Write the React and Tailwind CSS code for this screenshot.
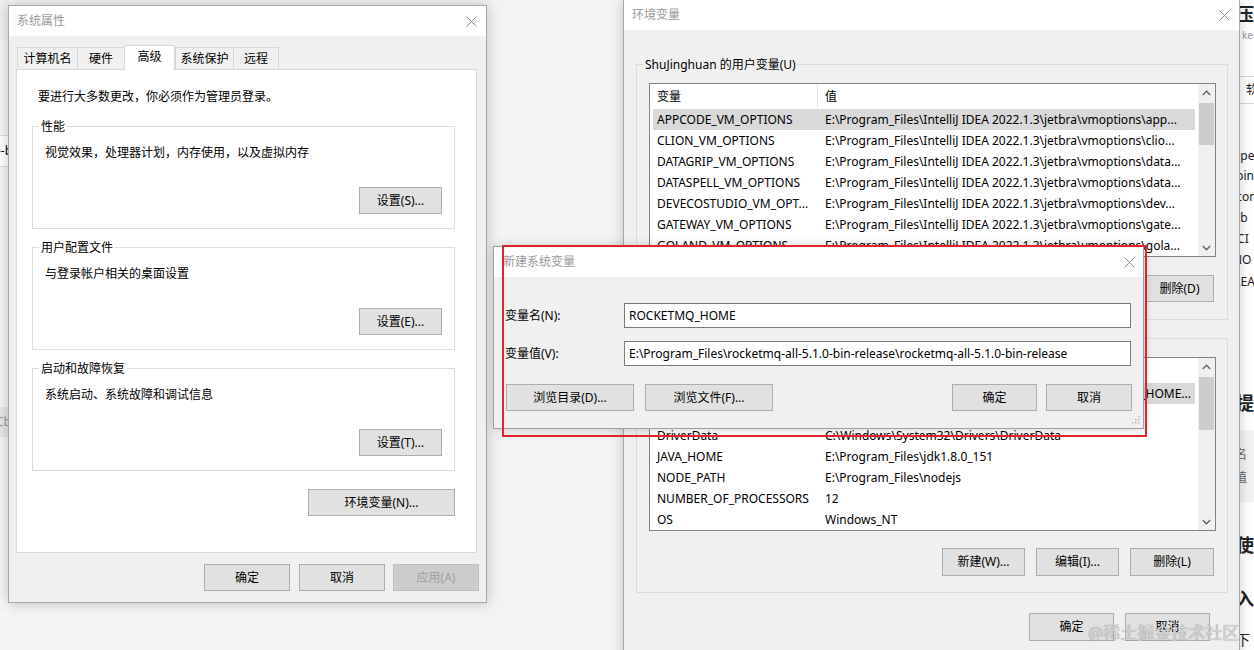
import React from "react";

const font = "font-['Noto_Sans','Noto_Sans_CJK_SC',sans-serif]";

function CloseX({ color = "#8a8a8a" }) {
  return (
    <svg width="11" height="11" viewBox="0 0 11 11">
      <path d="M0.5 0.5L10.5 10.5M10.5 0.5L0.5 10.5" stroke={color} strokeWidth="1" fill="none" />
    </svg>
  );
}

function Chevron({ up }) {
  return (
    <svg width="9" height="6" viewBox="0 0 9 6">
      <path d={up ? "M0.8 5L4.5 1.2L8.2 5" : "M0.8 1L4.5 4.8L8.2 1"} stroke="#606060" strokeWidth="1.3" fill="none" />
    </svg>
  );
}

function Btn({ children, className = "", disabled }) {
  return (
    <div
      className={`flex items-center justify-center h-[27px] border text-[12px] ${
        disabled ? "border-[#bfbfbf] bg-[#cccccc] text-[#a0a0a0]" : "border-[#adadad] bg-[#e1e1e1] text-black"
      } ${className}`}
    >
      {children}
    </div>
  );
}

function TitleBar({ title, className = "" }) {
  return (
    <div className={`h-[30px] bg-white flex items-center justify-between shrink-0 ${className}`}>
      <span className="text-[12px] text-[#9a9a9a]">{title}</span>
      <CloseX />
    </div>
  );
}

function Group({ legend, children, className = "" }) {
  return (
    <div className={`relative border border-[#dcdcdc] ${className}`}>
      <span className="absolute left-[6px] top-[-9px] px-[2px] leading-[17px] text-[12px] bg-inherit">{legend}</span>
      {children}
    </div>
  );
}

const tabs = [
  { label: "计算机名", w: "w-[60px]" },
  { label: "硬件", w: "w-[47px]" },
  { label: "高级", w: "w-[51px]", active: true },
  { label: "系统保护", w: "w-[58px]" },
  { label: "远程", w: "w-[46px]", last: true },
];

function SystemProps() {
  const sections = [
    { legend: "性能", desc: "视觉效果，处理器计划，内存使用，以及虚拟内存", btn: "设置(S)..." },
    { legend: "用户配置文件", desc: "与登录帐户相关的桌面设置", btn: "设置(E)..." },
    { legend: "启动和故障恢复", desc: "系统启动、系统故障和调试信息", btn: "设置(T)..." },
  ];
  return (
    <div className="absolute left-[8px] top-[5px] w-[479px] h-[598px] border border-[#a8a8a8] bg-[#f0f0f0] flex flex-col shadow-[0_0_12px_rgba(0,0,0,0.22)]">
      <TitleBar title="系统属性" className="pl-[8px] pr-[9px]" />
      <div className="mt-[9px] h-[25px] flex items-end pl-[8px]">
        {tabs.map((t) => (
          <div
            key={t.label}
            className={`${t.w} flex items-center justify-center text-[12px] border-[#d9d9d9] ${
              t.active
                ? "h-[25px] bg-white border-t border-l border-r relative z-10 pb-[3px]"
                : `h-[23px] bg-[#f0f0f0] border-t border-l ${t.last ? "border-r" : ""}`
            }`}
          >
            {t.label}
          </div>
        ))}
      </div>
      <div className="ml-[7px] -mt-px w-[461px] h-[484px] bg-white border border-[#d9d9d9] flex flex-col">
        <div className="pl-[21px] pt-[18px] text-[12px] leading-[17px]">要进行大多数更改，你必须作为管理员登录。</div>
        {sections.map((s, i) => (
          <Group
            key={s.legend}
            legend={s.legend}
            className={`ml-[15px] w-[423px] h-[103px] bg-white flex flex-col ${i === 0 ? "mt-[21px]" : "mt-[18px]"}`}
          >
            <div className="pl-[12px] pt-[17px] text-[12px] leading-[17px]">{s.desc}</div>
            <Btn className="self-end mr-[12px] mt-[26px] w-[83px]">{s.btn}</Btn>
          </Group>
        ))}
        <Btn className="self-end mr-[21px] mt-[18px] w-[147px]">环境变量(N)...</Btn>
      </div>
      <div className="mt-[11px] flex justify-end gap-[8px] pr-[7px]">
        <Btn className="w-[86px]">确定</Btn>
        <Btn className="w-[86px] ml-[1px]">取消</Btn>
        <Btn className="w-[86px]" disabled>应用(A)</Btn>
      </div>
    </div>
  );
}

const userRows = [
  ["APPCODE_VM_OPTIONS", "E:\\Program_Files\\IntelliJ IDEA 2022.1.3\\jetbra\\vmoptions\\app..."],
  ["CLION_VM_OPTIONS", "E:\\Program_Files\\IntelliJ IDEA 2022.1.3\\jetbra\\vmoptions\\clio..."],
  ["DATAGRIP_VM_OPTIONS", "E:\\Program_Files\\IntelliJ IDEA 2022.1.3\\jetbra\\vmoptions\\data..."],
  ["DATASPELL_VM_OPTIONS", "E:\\Program_Files\\IntelliJ IDEA 2022.1.3\\jetbra\\vmoptions\\data..."],
  ["DEVECOSTUDIO_VM_OPT...", "E:\\Program_Files\\IntelliJ IDEA 2022.1.3\\jetbra\\vmoptions\\dev..."],
  ["GATEWAY_VM_OPTIONS", "E:\\Program_Files\\IntelliJ IDEA 2022.1.3\\jetbra\\vmoptions\\gate..."],
  ["GOLAND_VM_OPTIONS", "E:\\Program_Files\\IntelliJ IDEA 2022.1.3\\jetbra\\vmoptions\\gola..."],
];

const sysRows = [
  ["CLASSPATH", ".;%JAVA_HOME%\\lib;%JAVA_HOME%\\lib\\dt.jar;%JAVA_HOME%\\lib\\tools.jar;%CATALINA_HOME..."],
  ["ComSpec", "C:\\Windows\\system32\\cmd.exe"],
  ["DriverData", "C:\\Windows\\System32\\Drivers\\DriverData"],
  ["JAVA_HOME", "E:\\Program_Files\\jdk1.8.0_151"],
  ["NODE_PATH", "E:\\Program_Files\\nodejs"],
  ["NUMBER_OF_PROCESSORS", "12"],
  ["OS", "Windows_NT"],
];

function VarList({ rows, thumbClass }) {
  return (
    <div className="ml-[12px] w-[567px] h-[174px] border border-[#828282] bg-white flex overflow-hidden">
      <div className="flex-1 flex flex-col overflow-hidden text-[12px]">
        <div className="h-[25px] flex items-center shrink-0">
          <div className="w-[168px] h-full flex items-center pl-[7px] border-r border-[#e5e5e5]">变量</div>
          <div className="pl-[7px]">值</div>
        </div>
        {rows.map(([name, value], i) => (
          <div key={name} className="h-[21px] flex items-center shrink-0 pl-[3px] pr-[3px]">
            <div className={`flex-1 h-full flex items-center overflow-hidden ${i === 0 ? "bg-[#d9d9d9]" : ""}`}>
              <div className="w-[172px] shrink-0 pl-[4px] whitespace-nowrap overflow-hidden">{name}</div>
              <div className={`flex-1 flex overflow-hidden whitespace-nowrap pr-[4px] ${i === 0 && value.startsWith(".") ? "justify-end" : ""}`}>
                <span className="shrink-0">{value}</span>
              </div>
            </div>
          </div>
        ))}
      </div>
      <div className="w-[17px] bg-[#f0f0f0] flex flex-col items-center shrink-0">
        <div className="h-[17px] flex items-center justify-center">
          <Chevron up />
        </div>
        <div className="flex-1 w-full flex flex-col items-center">
          <div className={`w-[15px] bg-[#cdcdcd] mt-[2px] ${thumbClass}`} />
        </div>
        <div className="h-[17px] flex items-center justify-center">
          <Chevron />
        </div>
      </div>
    </div>
  );
}

function EnvVars() {
  return (
    <div className="absolute left-[623px] top-0 w-[617px] h-[690px] border-l border-r border-[#a8a8a8] bg-[#f0f0f0] flex flex-col shadow-[0_0_12px_rgba(0,0,0,0.2)]">
      <TitleBar title="环境变量" className="pl-[8px] pr-[9px]" />
      <Group legend="ShuJinghuan 的用户变量(U)" className="ml-[12px] mt-[34px] w-[592px] h-[256px] bg-[#f0f0f0] flex flex-col pt-[18px]">
        <VarList rows={userRows} thumbClass="h-[42px]" />
        <div className="mt-[18px] flex justify-end gap-[11px] pr-[13px]">
          <Btn className="w-[83px]">新建(N)...</Btn>
          <Btn className="w-[83px]">编辑(E)...</Btn>
          <Btn className="w-[69px]">删除(D)</Btn>
        </div>
      </Group>
      <Group legend="系统变量(S)" className="ml-[12px] mt-[18px] w-[592px] h-[255px] bg-[#f0f0f0] flex flex-col pt-[18px]">
        <VarList rows={sysRows} thumbClass="h-[53px]" />
        <div className="mt-[17px] flex justify-end gap-[11px] pr-[13px]">
          <Btn className="w-[83px] h-[28px]">新建(W)...</Btn>
          <Btn className="w-[83px] h-[28px]">编辑(I)...</Btn>
          <Btn className="w-[84px] h-[28px]">删除(L)</Btn>
        </div>
      </Group>
      <div className="mt-[20px] flex justify-end gap-[11px] pr-[29px]">
        <Btn className="w-[85px] h-[28px]">确定</Btn>
        <Btn className="w-[85px] h-[28px]">取消</Btn>
      </div>
    </div>
  );
}

function NewVarDialog() {
  return (
    <div className="absolute left-[493px] top-[246px] w-[651px] h-[183px] border border-[#a0a0a0] bg-[#f0f0f0] flex flex-col shadow-[0_0_10px_rgba(0,0,0,0.2)]">
      <TitleBar title="新建系统变量" className="pl-[9px] pr-[8px]" />
      <div className="mt-[26px] flex items-center pl-[11px]">
        <span className="w-[119px] text-[12px]">变量名(N):</span>
        <div className="w-[507px] h-[25px] border border-[#7a7a7a] bg-white flex items-center pl-[4px] text-[12px]">ROCKETMQ_HOME</div>
      </div>
      <div className="mt-[13px] flex items-center pl-[11px]">
        <span className="w-[119px] text-[12px]">变量值(V):</span>
        <div className="w-[507px] h-[25px] border border-[#7a7a7a] bg-white flex items-center pl-[4px] text-[12px] whitespace-nowrap overflow-hidden">
          E:\Program_Files\rocketmq-all-5.1.0-bin-release\rocketmq-all-5.1.0-bin-release
        </div>
      </div>
      <div className="mt-[18px] flex items-center pl-[12px]">
        <Btn className="w-[128px]">浏览目录(D)...</Btn>
        <Btn className="w-[128px] ml-[11px]">浏览文件(F)...</Btn>
        <Btn className="w-[85px] ml-auto">确定</Btn>
        <Btn className="w-[86px] ml-[9px] mr-[11px]">取消</Btn>
      </div>
      <div className="flex justify-end pr-[3px] pt-[5px]">
        <svg width="8" height="8" viewBox="0 0 8 8">
          <rect x="6" y="0" width="1.5" height="1.5" fill="#b5b5b5" />
          <rect x="3" y="3" width="1.5" height="1.5" fill="#b5b5b5" />
          <rect x="6" y="3" width="1.5" height="1.5" fill="#b5b5b5" />
          <rect x="0" y="6" width="1.5" height="1.5" fill="#b5b5b5" />
          <rect x="3" y="6" width="1.5" height="1.5" fill="#b5b5b5" />
          <rect x="6" y="6" width="1.5" height="1.5" fill="#b5b5b5" />
        </svg>
      </div>
    </div>
  );
}

function BackPage() {
  return (
    <div className="absolute left-[1196px] top-0 w-[58px] h-[650px] bg-white flex flex-col text-[#222] pl-[40px]">
      <div className="h-[30px] flex items-center text-[18px] font-bold whitespace-nowrap">压缩</div>
      <div className="h-[12px] text-[10px] leading-[10px] text-[#999] pl-[6px]">ke</div>
      <div className="mt-[34px] h-[28px] border-t border-b border-l border-[#d8d8d8] flex items-center pl-[9px] text-[12px] whitespace-nowrap">
        软件
      </div>
      <div className="mt-[41px] flex flex-col text-[12px] leading-[21px] whitespace-nowrap -ml-[3px]">
        <span>open</span>
        <span className="-mt-px">lbin</span>
        <span>.con</span>
        <span className="pl-[4px]">.b</span>
        <span>ICI</span>
        <span>NO</span>
        <span className="mt-[1px]">REA</span>
      </div>
      <div className="mt-[98px] text-[18px] font-bold whitespace-nowrap">提系</div>
      <div className="mt-[13px] h-[73px] bg-[#f3f3f3] flex flex-col justify-center text-[12px] text-[#666] leading-[23px] -ml-[2px] pl-[1px]">
        <span>名</span>
        <span>值</span>
      </div>
      <div className="mt-[30px] text-[18px] font-bold">使</div>
      <div className="mt-[27px] text-[18px] font-bold whitespace-nowrap">入属</div>
      <div className="mt-[16px] text-[14px] whitespace-nowrap">下</div>
    </div>
  );
}

function LeftStrip() {
  return (
    <div className="absolute left-0 top-0 w-[10px] h-[650px] bg-[#f5f5f5] flex flex-col">
      <div className="h-[40px] bg-[#efefef]" />
      <div className="mt-[95px] h-[32px] border-t border-b border-[#dcdcdc] bg-white flex items-center text-[12px] -ml-[6px] whitespace-nowrap">
        e-b
      </div>
      <div className="mt-[240px] h-[30px] bg-[#e6e6e6] flex items-center text-[12px] text-[#999] -ml-[4px] whitespace-nowrap">
        Cb
      </div>
    </div>
  );
}

export default function App() {
  return (
    <div className={`relative w-[1254px] h-[650px] overflow-hidden bg-[#f3f3f3] text-black ${font}`}>
      <LeftStrip />
      <BackPage />
      <SystemProps />
      <EnvVars />
      <NewVarDialog />
      <div className="absolute left-[502px] top-[245px] w-[645px] h-[192px] border-2 border-[#e0252f]" />
      <div className="absolute left-[1088px] top-[620px] text-[17px] text-[#d4d4d4] whitespace-nowrap [text-shadow:0_0_1px_rgba(0,0,0,0.45)]">
        @稀土掘金技术社区
      </div>
    </div>
  );
}
